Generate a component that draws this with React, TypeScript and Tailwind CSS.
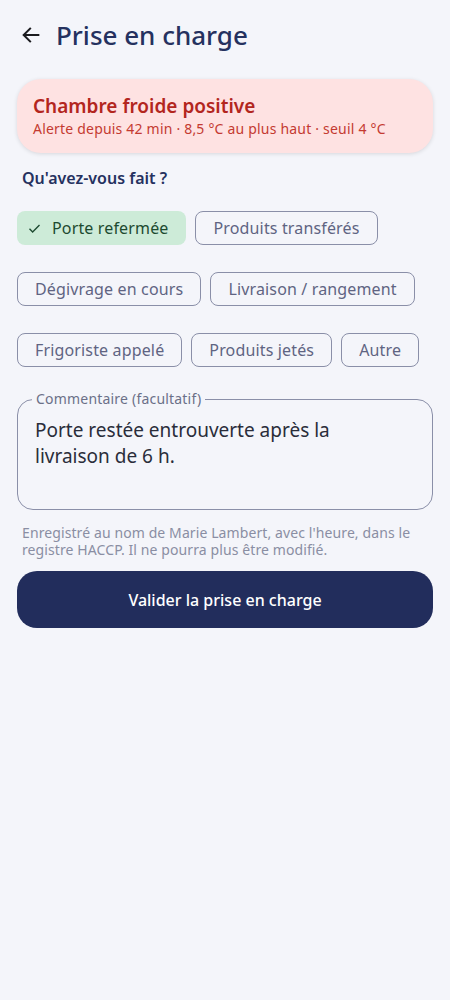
import React, { useState } from 'react';

const actions = [
    'Porte refermée',
    'Produits transférés',
    'Dégivrage en cours',
    'Livraison / rangement',
    'Frigoriste appelé',
    'Produits jetés',
    'Autre',
];

export default function App() {
    const [selected, setSelected] = useState<string[]>(['Porte refermée']);
    const [comment, setComment] = useState('Porte restée entrouverte après la livraison de 6 h.');

    const toggle = (label: string) => {
        setSelected((prev) =>
            prev.includes(label) ? prev.filter((l) => l !== label) : [...prev, label]
        );
    };

    return (
        <div className="min-h-screen bg-[#f4f5fa] px-[17px] font-['Noto_Sans',sans-serif]">
            {/* header */}
            <div className="flex h-[70px] items-center">
                <button className="ml-[3px] text-[#1b1b1f]">
                    <svg width="22" height="22" viewBox="0 0 24 24" fill="none" stroke="currentColor" strokeWidth="2.2" strokeLinecap="square">
                        <path d="M20 12H5" />
                        <path d="M11 5L4 12L11 19" />
                    </svg>
                </button>
                <h1 className="ml-[14px] text-[26px] font-medium text-[#25315f]">Prise en charge</h1>
            </div>

            {/* alert */}
            <div className="mt-[9px] flex h-[74px] flex-col justify-center rounded-[24px] bg-[#fee2e2] px-4 shadow-[0_1px_4px_rgba(0,0,0,0.12)]">
                <div className="text-[19px] font-semibold leading-[25px] text-[#b3261e]">Chambre froide positive</div>
                <div className="text-[14px] leading-[19px] tracking-[0.2px] text-[#c43a31]">
                    Alerte depuis 42 min · 8,5 °C au plus haut · seuil 4 °C
                </div>
            </div>

            <div className="mt-[13px] pl-[5px] text-[16px] font-semibold text-[#25315f]">Qu'avez-vous fait ?</div>

            {/* chips */}
            <div className="mt-[21px] flex flex-wrap gap-x-[9px] gap-y-[27px]">
                {actions.map((a) => {
                    const on = selected.includes(a);
                    return (
                        <button
                            key={a}
                            onClick={() => toggle(a)}
                            className={
                                on
                                    ? 'flex h-[34px] items-center gap-[10px] rounded-lg bg-[#cdebd8] pl-[10px] pr-[18px] text-[16px] tracking-[0.15px] text-[#1d4a30]'
                                    : 'flex h-[34px] items-center rounded-lg border border-[#8a8fa8] px-[17px] text-[16px] tracking-[0.15px] text-[#5f6482]'
                            }
                        >
                            {on && (
                                <svg width="15" height="15" viewBox="0 0 24 24" fill="none" stroke="currentColor" strokeWidth="2.2">
                                    <path d="M4 12.5l5 5L20 6.5" />
                                </svg>
                            )}
                            {a}
                        </button>
                    );
                })}
            </div>

            {/* comment */}
            <fieldset className="mt-[25px] h-[118px] rounded-[16px] border border-[#8a8fa8] px-[17px]">
                <legend className="ml-[-3px] px-[4px] text-[14px] leading-[14px] tracking-[0.2px] text-[#6b7088]">Commentaire (facultatif)</legend>
                <textarea
                    value={comment}
                    onChange={(e) => setComment(e.target.value)}
                    rows={3}
                    className="mt-[11px] w-full resize-none bg-transparent pr-[60px] text-[19px] leading-[26px] text-[#2a2d3a] outline-none"
                />
            </fieldset>

            <p className="mt-[14px] px-[5px] text-[14px] leading-[17px] tracking-[0.1px] text-[#8a8ea3]">
                Enregistré au nom de Marie Lambert, avec l'heure, dans le registre HACCP. Il ne pourra plus être modifié.
            </p>

            <button className="mt-[13px] h-[57px] w-full rounded-[20px] bg-[#222d5c] text-[16px] font-medium text-white">
                Valider la prise en charge
            </button>
        </div>
    );
}
